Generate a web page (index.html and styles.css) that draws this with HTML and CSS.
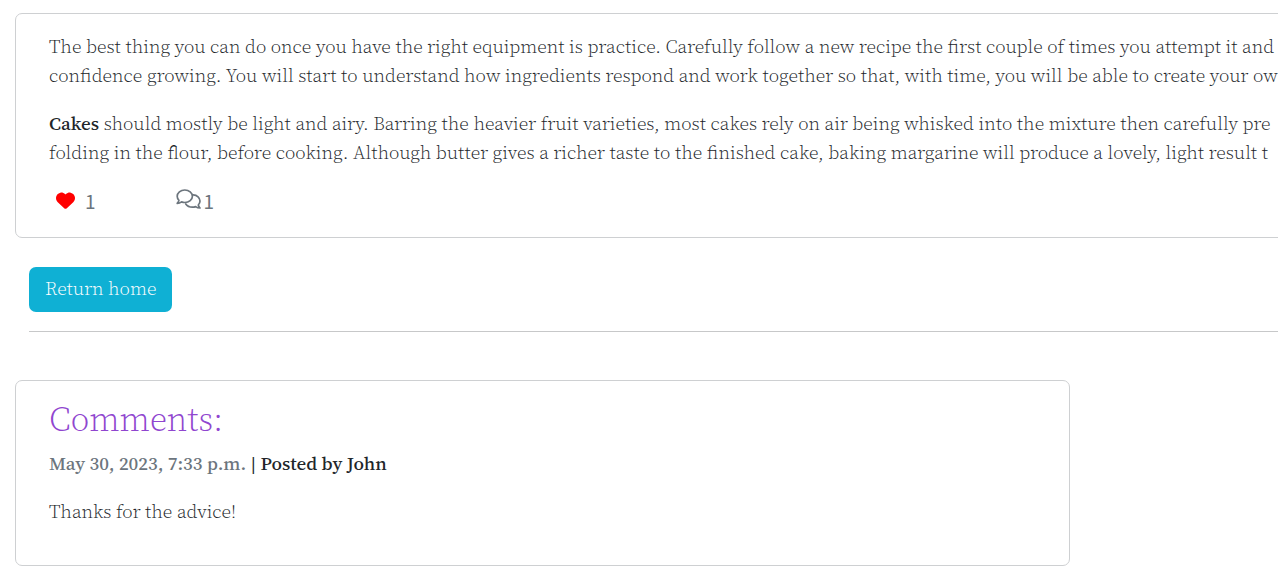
FILE: index.html
```html
<!DOCTYPE html>
<html lang="en">
<head>
<meta charset="utf-8">
<meta name="viewport" content="width=device-width, initial-scale=1">
<title>Baking tips</title>
<link rel="stylesheet" href="styles.css">
</head>
<body>
<main class="page">
  <article class="card post">
    <p class="copy">The best thing you can do once you have the right equipment is practice. Carefully follow a new recipe the first couple of times you attempt it and<br>confidence growing. You will start to understand how ingredients respond and work together so that, with time, you will be able to create your ow</p>
    <p class="copy"><strong>Cakes</strong> should mostly be light and airy. Barring the heavier fruit varieties, most cakes rely on air being whisked into the mixture then carefully pre<br>folding in the flour, before cooking. Although butter gives a richer taste to the finished cake, baking margarine will produce a lovely, light result t</p>
    <div class="stats">
      <button class="like" type="button" aria-label="Like, 1">
        <svg class="heart" viewBox="0 0 512 512" aria-hidden="true"><path d="M47.600 300.400 228.300 469.100c7.500 7 17.400 10.900 27.700 10.900s20.200-3.900 27.700-10.900L464.400 300.400c30.400-28.300 47.600-68 47.600-109.500v-5.800c0-69.900-50.500-129.500-119.400-141C347 36.500 300.600 51.400 268 84L256 96 244 84c-32.600-32.600-79-47.500-124.600-39.900C50.500 55.600 0 115.200 0 185.100v5.800c0 41.500 17.200 81.200 47.600 109.500z"/></svg>
        <span>1</span>
      </button>
      <span class="replies">
        <svg class="bubbles" viewBox="0 0 25 20" aria-hidden="true"><path d="M8.800 1C4.500 1 1.200 3.800 1.200 7.300c0 1.500.6 2.900 1.700 4C2.700 12.500 2 13.400 1.200 14.300c1.700 0 3.300-.6 4.400-1.400 1 .4 2.100.6 3.200.6 4.300 0 7.600-2.700 7.600-6.200S13.100 1 8.800 1z"/><path d="M17.200 5.900c3.900.2 6.800 2.800 6.800 6.100 0 1.500-.6 2.900-1.700 4 .2 1.200.9 2.100 1.700 3-1.700 0-3.300-.6-4.400-1.400-1 .4-2.100.6-3.200.6-3 0-5.400-1.300-6.600-3.200"/></svg>
        <span>1</span>
      </span>
    </div>
  </article>
  <nav class="actions"><a class="home" href="#">Return home</a></nav>
  <hr class="rule">
  <section class="card comments">
    <h2 class="title">Comments:</h2>
    <p class="meta"><time class="date" datetime="2023-05-30T19:33">May 30, 2023, 7:33 p.m.</time> | Posted by John</p>
    <p class="copy">Thanks for the advice!</p>
  </section>
</main>
</body>
</html>
```
FILE: styles.css
```css
* { box-sizing: border-box; }
body {
  margin: 0;
  background: #fff;
  color: #212529;
  font: 300 19px/29px "Source Serif Pro", "Source Serif 4", "Liberation Serif", serif;
}
p, h2 { margin: 0; }
.page { padding: 13px 0 22px 15px; overflow: hidden; }
.card {
  display: flex;
  flex-direction: column;
  border: 1px solid #ced0d2;
  border-radius: 7px;
}
.post { gap: 19px; width: 110%; padding: 18px 33px 22px; }
.copy { color: #212529; white-space: nowrap; }
strong { font-weight: 500; }
.stats {
  display: flex;
  gap: 80px;
  padding-left: 7px;
  color: #6c757d;
  font-family: "Noto Sans CJK JP", "Noto Sans", sans-serif;
  font-weight: 400;
}
.like {
  display: flex;
  align-items: center;
  gap: 10px;
  padding: 0;
  border: 0;
  background: none;
  color: inherit;
  font: inherit;
}
.heart { width: 19px; height: 19px; fill: #f00; }
.replies { display: flex; align-items: center; gap: 3px; }
.bubbles {
  width: 25px;
  height: 20px;
  margin-bottom: 3px;
  fill: none;
  stroke: currentColor;
  stroke-width: 1.7;
  stroke-linejoin: round;
  stroke-linecap: round;
}
.actions { display: flex; padding: 29px 14px 19px; }
.home {
  padding: 7px 16px 9px;
  border-radius: 7px;
  background: #0fb0d4;
  color: #fff;
  text-decoration: none;
}
.rule { height: 1px; margin: 0 0 48px 14px; border: 0; background: #c7c8c9; }
.comments { width: 83.5%; padding: 17px 33px 39px; }
.title { color: #9046cf; font-size: 34px; line-height: 42px; font-weight: 300; }
.meta { margin: 9px 0 19px; font-weight: 500; }
.date { color: #6c757d; }
```
